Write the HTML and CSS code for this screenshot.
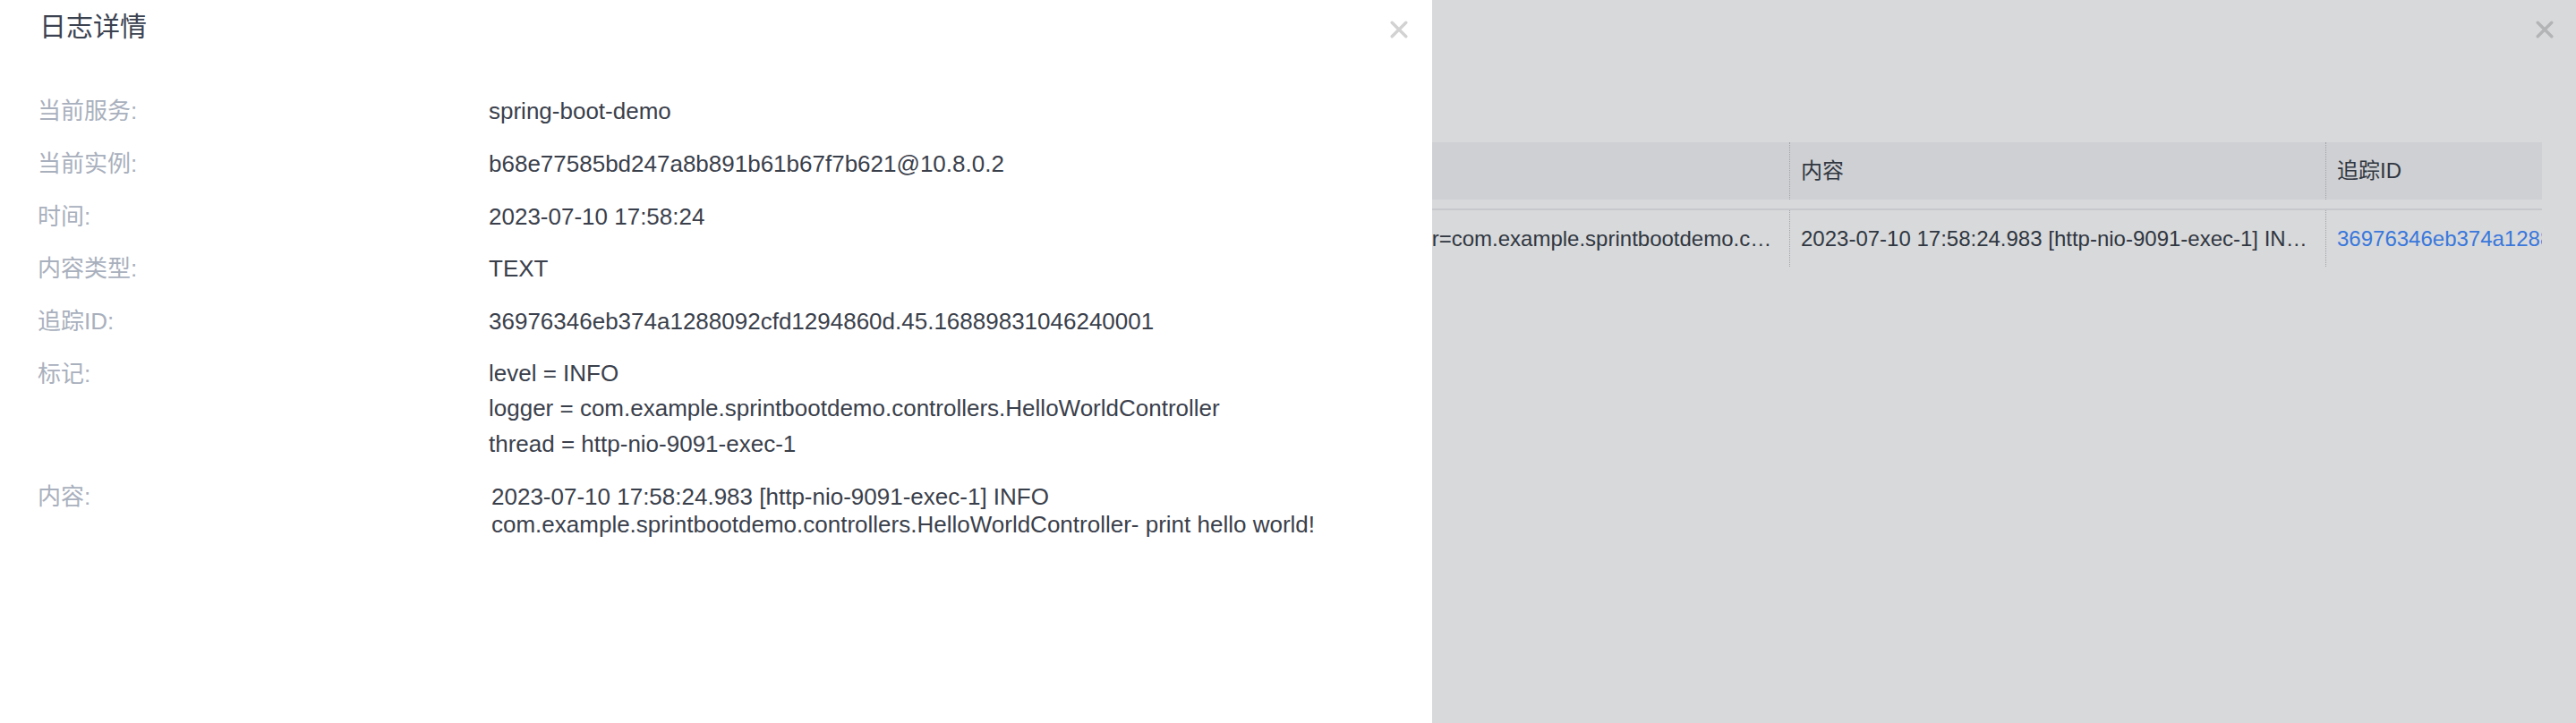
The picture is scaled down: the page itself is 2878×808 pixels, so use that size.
FILE: index.html
```html
<!DOCTYPE html>
<html lang="zh-CN">
<head>
<meta charset="utf-8">
<title>日志详情</title>
<link rel="stylesheet" href="styles.css">
</head>
<body>
<div class="page">
  <div class="page-head">
    <span class="close-icon page-close">
      <svg viewBox="0 0 20 20" width="20" height="20"><path d="M2.2 2.2 L17.8 17.8 M17.8 2.2 L2.2 17.8" /></svg>
    </span>
  </div>
  <div class="table-wrap">
    <div class="grid thead">
      <div class="cell"></div>
      <div class="cell"></div>
      <div class="cell">内容</div>
      <div class="cell">追踪ID</div>
    </div>
    <div class="grid trow">
      <div class="cell"></div>
      <div class="cell">logger=com.example.sprintbootdemo.controllers.HelloWorldController</div>
      <div class="cell">2023-07-10 17:58:24.983 [http-nio-9091-exec-1] INFO com.example.sprintbootdemo.controllers.HelloWorldController- print hello world!</div>
      <div class="cell link">36976346eb374a1288092cfd1294860d.45.16889831046240001</div>
    </div>
  </div>
</div>

<div class="mask"></div>

<aside class="drawer">
  <div class="drawer-head">
    <h1 class="drawer-title">日志详情</h1>
    <span class="close-icon drawer-close">
      <svg viewBox="0 0 20 20" width="20" height="20"><path d="M2.2 2.2 L17.8 17.8 M17.8 2.2 L2.2 17.8" /></svg>
    </span>
  </div>
  <div class="drawer-body">
    <div class="row"><div class="label">当前服务:</div><div class="value">spring-boot-demo</div></div>
    <div class="row"><div class="label">当前实例:</div><div class="value">b68e77585bd247a8b891b61b67f7b621@10.8.0.2</div></div>
    <div class="row"><div class="label">时间:</div><div class="value">2023-07-10 17:58:24</div></div>
    <div class="row"><div class="label">内容类型:</div><div class="value">TEXT</div></div>
    <div class="row"><div class="label">追踪ID:</div><div class="value">36976346eb374a1288092cfd1294860d.45.16889831046240001</div></div>
    <div class="row">
      <div class="label">标记:</div>
      <div class="value tags">
        <div class="tag">level = INFO</div>
        <div class="tag">logger = com.example.sprintbootdemo.controllers.HelloWorldController</div>
        <div class="tag">thread = http-nio-9091-exec-1</div>
      </div>
    </div>
    <div class="row">
      <div class="label">内容:</div>
      <div class="value content">2023-07-10 17:58:24.983 [http-nio-9091-exec-1] INFO com.example.sprintbootdemo.controllers.HelloWorldController- print hello world!</div>
    </div>
  </div>
</aside>
</body>
</html>
```

FILE: styles.css
```css
* { box-sizing: border-box; }

html, body {
  margin: 0;
  padding: 0;
  width: 2878px;
  height: 808px;
  overflow: hidden;
  background: #ffffff;
  font-family: "Liberation Sans", "Noto Sans CJK SC", sans-serif;
}

/* ---------- underlying page ---------- */
.page {
  height: 808px;
  padding: 23px 25px 0 40px;
}

.page-head {
  display: flex;
  justify-content: flex-end;
  align-items: flex-start;
  height: 20px;
}

.close-icon {
  display: block;
  width: 20px;
  height: 20px;
}

.close-icon svg {
  display: block;
  fill: none;
  stroke: #d2d2d2;
  stroke-width: 3.4;
  stroke-linecap: round;
}

.table-wrap {
  margin-top: 116px;
  width: 2800px;
  overflow: hidden;
  font-size: 24px;
  color: #333a44;
}

.grid {
  display: grid;
  grid-template-columns: 1488px 471px 599px 700px;
  width: 3258px;
}

.thead {
  height: 64px;
  background: #f4f4f6;
}

.trow {
  margin-top: 10px;
  height: 65px;
  border-top: 2px solid #ebebec;
}

.cell {
  white-space: nowrap;
  overflow: hidden;
  text-overflow: ellipsis;
  padding: 0 16px 0 12px;
}

.cell + .cell {
  border-left: 1px dotted #bcbec2;
}

.thead .cell { line-height: 64px; }
.trow .cell { line-height: 63px; }

.trow .cell:nth-child(3) { padding-right: 14px; }

.cell.link {
  color: #3e89ff;
  text-overflow: clip;
}

/* ---------- mask ---------- */
.mask {
  position: fixed;
  inset: 0;
  background: rgba(38, 44, 58, 0.18);
}

/* ---------- drawer ---------- */
.drawer {
  position: fixed;
  left: 0;
  top: 0;
  bottom: 0;
  width: 1600px;
  background: #ffffff;
  padding: 8px 27px 0 42px;
}

.drawer-head {
  display: flex;
  justify-content: space-between;
  align-items: flex-start;
}

.drawer-title {
  margin: 0 0 0 2px;
  font-size: 30px;
  line-height: 44px;
  font-weight: normal;
  color: #3b4250;
}

.drawer-close {
  margin-top: 15px;
}

.drawer-body {
  margin-top: 52px;
  font-size: 26px;
}

.row {
  display: grid;
  grid-template-columns: 504px 1fr;
  line-height: 40px;
  margin-bottom: 18.8px;
}

.label {
  color: #a9b0bd;
}

.value {
  color: #3a404b;
}

.tag {
  line-height: 39.5px;
}

.content {
  line-height: 31px;
  padding: 5px 0 0 3px;
}
```
